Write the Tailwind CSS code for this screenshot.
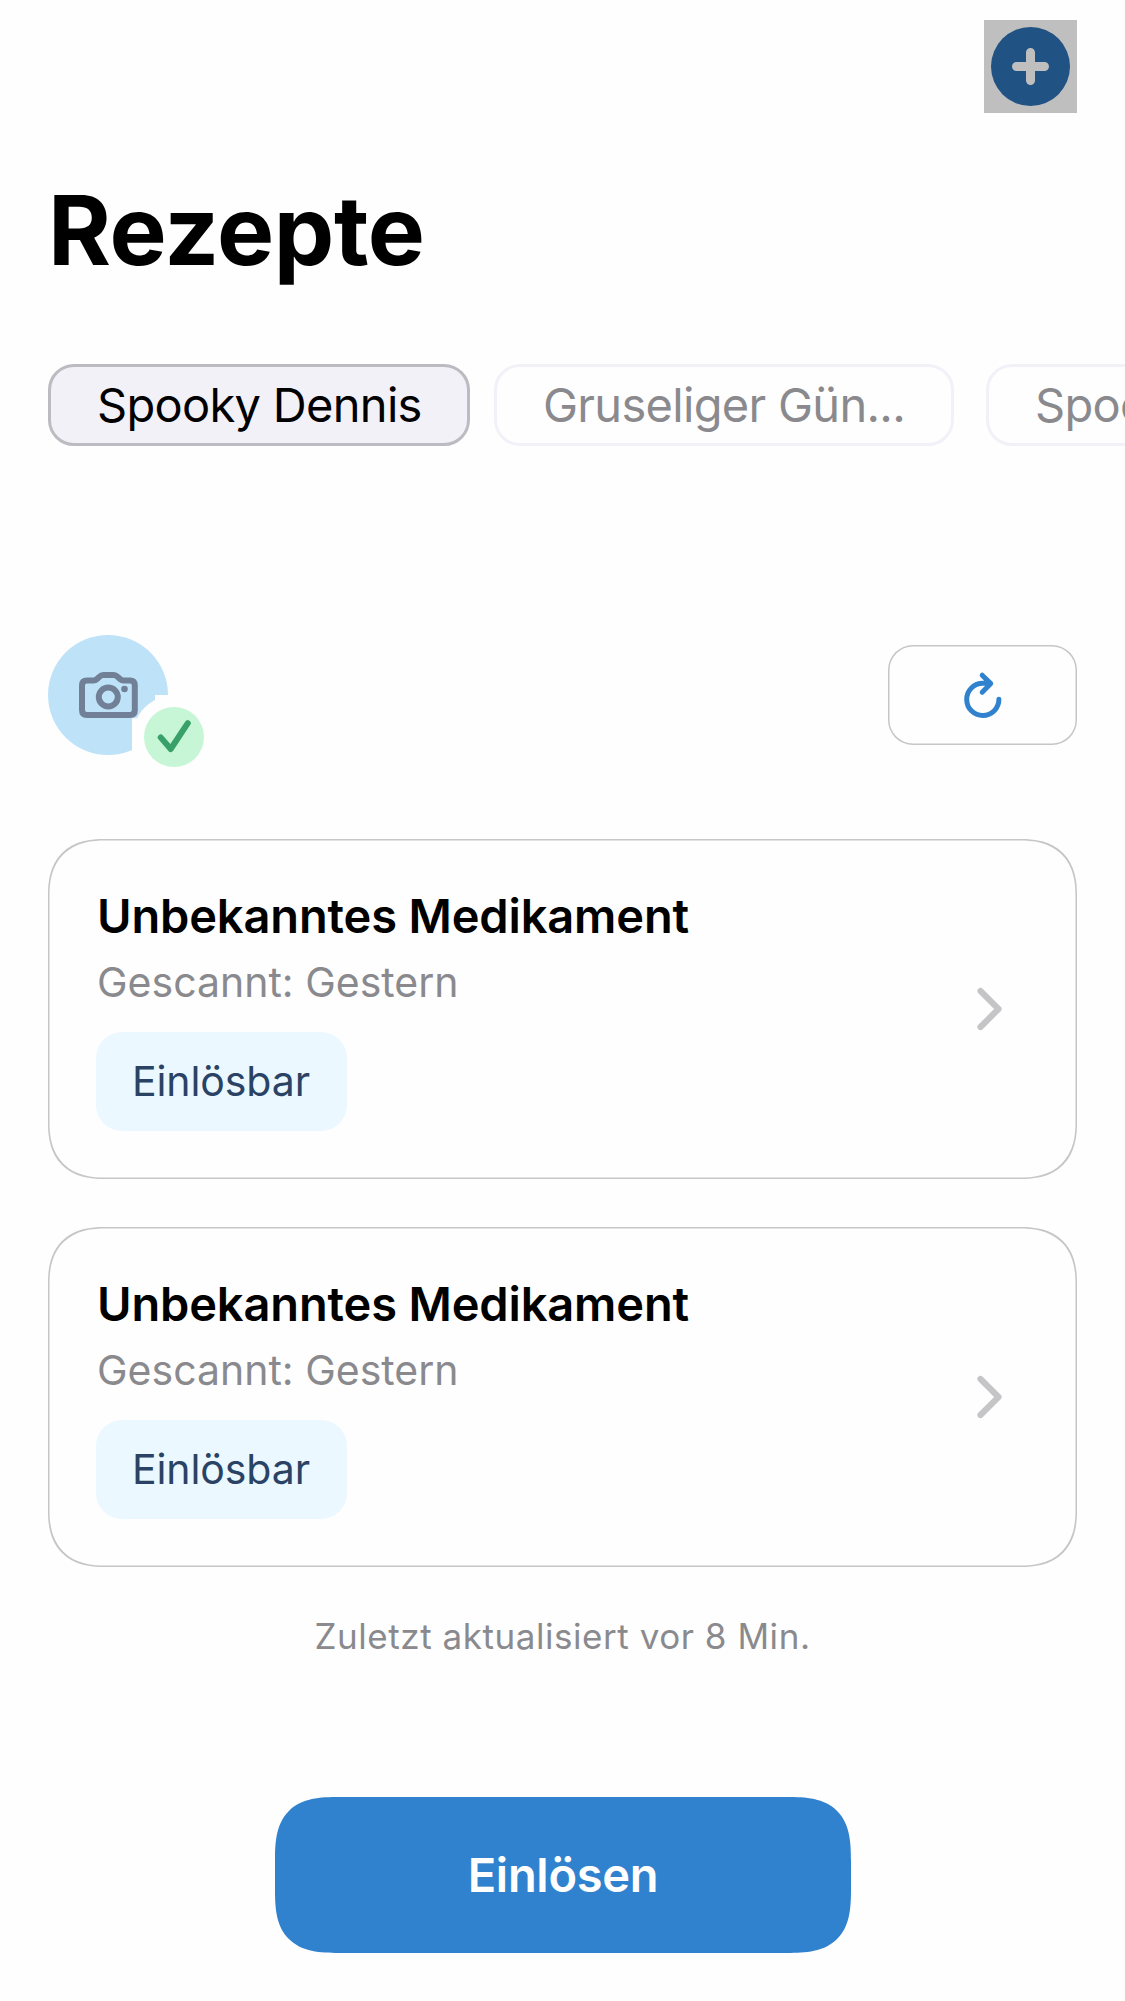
<!DOCTYPE html>
<html lang="de">
<head>
<meta charset="utf-8">
<title>Rezepte</title>
<script src="https://cdn.jsdelivr.net/npm/@tailwindcss/browser@4"></script>
</head>
<body class="bg-[#fefefe] font-['Inter',sans-serif] text-black">
<main class="flex h-[2001px] w-[1125px] flex-col overflow-hidden px-12 pt-5">
  <header class="flex shrink-0 justify-end">
    <button class="flex size-[93px] items-center justify-center bg-[#bfbfbf]" aria-label="Hinzufügen">
      <svg class="size-[79px]" viewBox="0 0 79 79" fill="none"><circle cx="39.5" cy="39.5" r="39.5" fill="#205283"/><path d="M39.5 25.500v28M25.500 39.500h28" stroke="#bfbfbf" stroke-width="9" stroke-linecap="round"/></svg>
    </button>
  </header>

  <h1 class="mt-[69px] shrink-0 text-[96px] leading-none font-bold tracking-[-0.4px]">Rezepte</h1>

  <nav class="mt-[86px] flex shrink-0 text-[47px] leading-none tracking-[-0.7px] whitespace-nowrap text-[#8a8a8e]">
    <button class="flex h-[82px] w-[422px] shrink-0 items-center rounded-[26px] border-3 border-[#bcbbc1] bg-[#f2f1f7] pb-[2px] pl-[46px] text-black">Spooky Dennis</button>
    <button class="ml-6 flex h-[82px] w-[460px] shrink-0 items-center rounded-[26px] border-3 border-[#f2f1f7] pb-[2px] pl-[46px]">Gruseliger Gün...</button>
    <button class="ml-8 flex h-[82px] w-[422px] shrink-0 items-center rounded-[26px] border-3 border-[#f2f1f7] pb-[2px] pl-[46px]">Spooky Dennis</button>
  </nav>

  <section class="mt-[189px] flex h-[120px] shrink-0 items-center justify-between">
    <svg class="h-[120px] w-[160px] overflow-visible" viewBox="0 0 160 120" fill="none">
      <circle cx="60" cy="60" r="60" fill="#bee3f8"/>
      <g stroke="#718096" stroke-width="6" stroke-linejoin="round">
        <path d="M39 45.500h6.500c1.500 0 2.400-.5 3.500-1.500l2.300-2.200c1.200-1.200 2.200-1.800 4-1.800h10.400c1.800 0 2.800.6 4 1.800L72 44c1.100 1 2 1.500 3.500 1.500H82c3.200 0 4.800 1.700 4.800 4.800V75c0 3.200-1.600 5-4.800 5H39c-3.300 0-5-1.800-5-5V50.300c0-3.100 1.700-4.800 5-4.800Z"/>
        <circle cx="60.300" cy="62" r="9.500"/>
      </g>
      <circle cx="76.500" cy="54" r="3.300" fill="#718096"/>
      <!-- white cut-out behind the status badge -->
      <path d="M107 60h30v80H84V83.300h5C93 75 99 69.500 107 65Z" fill="#fefefe"/>
      <circle cx="126" cy="102" r="30" fill="#c6f6d5"/>
      <path d="m112.700 102.700 10 11.600L139.800 88.500" transform="translate(0 -.3)" stroke="#38a169" stroke-width="6" stroke-linecap="round" stroke-linejoin="round"/>
    </svg>
    <button class="flex h-[100px] w-[189px] items-center justify-center rounded-[25px] shadow-[inset_0_0_0_1.5px_#c6c6c7]" aria-label="Aktualisieren">
      <svg class="size-[60px]" viewBox="0 0 60 60" fill="none" stroke="#3182ce" stroke-width="5" stroke-linecap="round" stroke-linejoin="round"><path d="M45.900 34.300A16.100 16.100 0 1 1 29.800 18.300h7.500M29.200 10.200l8.600 8.400-8.600 8.600"/></svg>
    </button>
  </section>

  <section class="mt-[84px] flex shrink-0 flex-col gap-12">
    <article class="flex h-[340px] items-center justify-between rounded-[49px] pr-[74px] pb-[1px] pl-[49px] shadow-[inset_0_0_0_1.5px_#c6c6c7] supports-[corner-shape:squircle]:rounded-[56px] supports-[corner-shape:squircle]:[corner-shape:superellipse(1.27)]">
      <div class="flex h-full flex-col items-start">
        <h2 class="mt-[53px] text-[47px] leading-[48px] font-semibold tracking-[-0.15px]">Unbekanntes Medikament</h2>
        <p class="mt-[21px] text-[41px] leading-[42px] text-[#8a8a8e]">Gescannt: Gestern</p>
        <span class="-ml-px mt-[29px] flex h-[99px] w-[251px] items-center rounded-[26px] bg-[#ebf8ff] pl-[36px] text-[41px] leading-none tracking-[-0.1px] text-[#2a4365]">Einlösbar</span>
      </div>
      <svg class="h-[44px] w-[28px]" viewBox="0 0 28 44" fill="none" stroke="#c5c5c7" stroke-width="6.200" stroke-linecap="round" stroke-linejoin="round"><path d="m5.500 4 18 18-18 18"/></svg>
    </article>
    <article class="flex h-[340px] items-center justify-between rounded-[49px] pr-[74px] pb-[1px] pl-[49px] shadow-[inset_0_0_0_1.5px_#c6c6c7] supports-[corner-shape:squircle]:rounded-[56px] supports-[corner-shape:squircle]:[corner-shape:superellipse(1.27)]">
      <div class="flex h-full flex-col items-start">
        <h2 class="mt-[53px] text-[47px] leading-[48px] font-semibold tracking-[-0.15px]">Unbekanntes Medikament</h2>
        <p class="mt-[21px] text-[41px] leading-[42px] text-[#8a8a8e]">Gescannt: Gestern</p>
        <span class="-ml-px mt-[29px] flex h-[99px] w-[251px] items-center rounded-[26px] bg-[#ebf8ff] pl-[36px] text-[41px] leading-none tracking-[-0.1px] text-[#2a4365]">Einlösbar</span>
      </div>
      <svg class="h-[44px] w-[28px]" viewBox="0 0 28 44" fill="none" stroke="#c5c5c7" stroke-width="6.200" stroke-linecap="round" stroke-linejoin="round"><path d="m5.500 4 18 18-18 18"/></svg>
    </article>
  </section>

  <p class="mt-[51px] shrink-0 text-center text-[35px] leading-[36px] tracking-[0.55px] text-[#8a8a8e]">Zuletzt aktualisiert vor 8 Min.</p>

  <button class="mt-[143px] flex h-[156px] w-[576px] shrink-0 items-center justify-center self-center rounded-[50px] bg-[#3182ce] pb-[2px] pl-[1px] text-[47px] leading-none font-semibold tracking-[-0.26px] text-white supports-[corner-shape:squircle]:rounded-[64px] supports-[corner-shape:squircle]:[corner-shape:superellipse(1.5)]">Einlösen</button>
</main>
</body>
</html>
